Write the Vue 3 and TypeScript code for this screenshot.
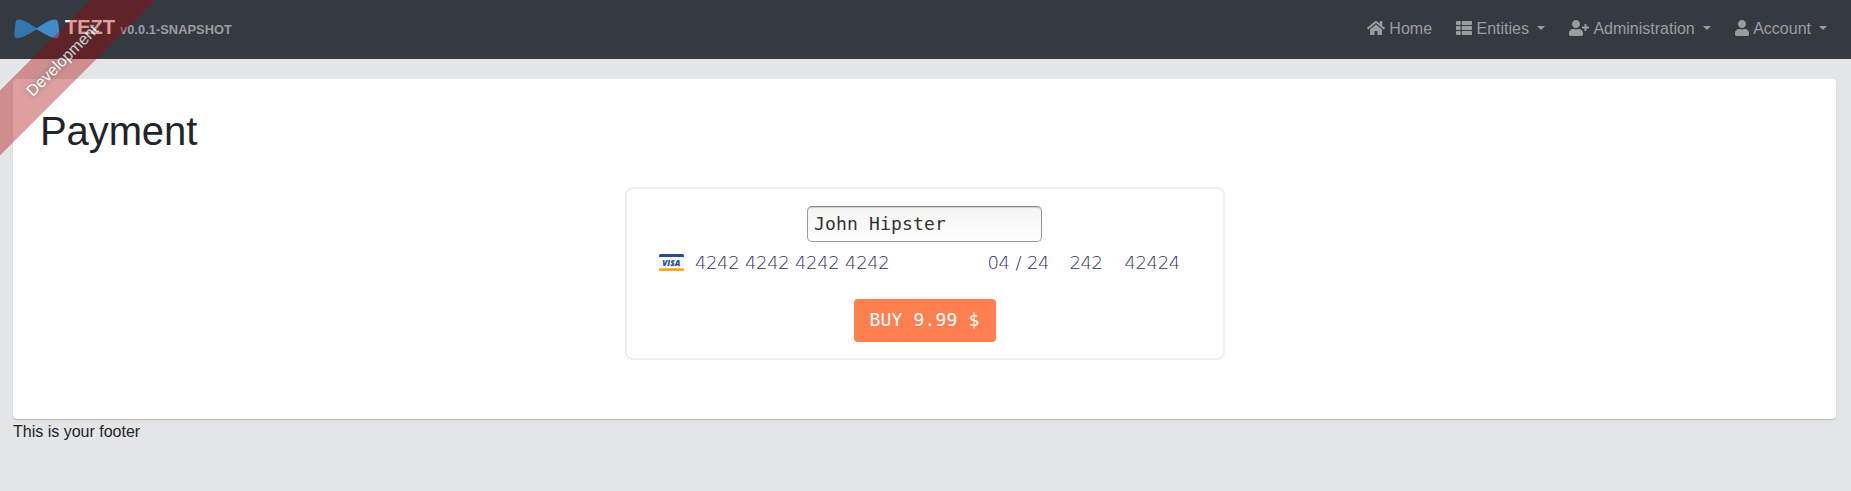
<script setup lang="ts">
import { ref } from 'vue'

interface NavItem {
  label: string
  viewBox: string
  width: number
  path: string
  dropdown: boolean
}

const items: NavItem[] = [
  {
    label: 'Home',
    viewBox: '0 0 576 512',
    width: 18,
    dropdown: false,
    path: 'M280.37 148.26L96 300.11V464a16 16 0 0 0 16 16l112.06-.29a16 16 0 0 0 15.92-16V368a16 16 0 0 1 16-16h64a16 16 0 0 1 16 16v95.64a16 16 0 0 0 16 16.05L464 480a16 16 0 0 0 16-16V300L295.67 148.26a12.19 12.19 0 0 0-15.3 0zM571.6 251.47L488 182.56V44.05a12 12 0 0 0-12-12h-56a12 12 0 0 0-12 12v72.61L318.47 43a48 48 0 0 0-61 0L4.34 251.47a12 12 0 0 0-1.6 16.9l25.5 31A12 12 0 0 0 45.15 301l235.22-193.74a12.19 12.19 0 0 1 15.3 0L530.9 301a12 12 0 0 0 16.9-1.6l25.5-31a12 12 0 0 0-1.7-16.93z',
  },
  {
    label: 'Entities',
    viewBox: '0 0 512 512',
    width: 16,
    dropdown: true,
    path: 'M149.333 216v80c0 13.255-10.745 24-24 24H24c-13.255 0-24-10.745-24-24v-80c0-13.255 10.745-24 24-24h101.333c13.255 0 24 10.745 24 24zM0 376v80c0 13.255 10.745 24 24 24h101.333c13.255 0 24-10.745 24-24v-80c0-13.255-10.745-24-24-24H24c-13.255 0-24 10.745-24 24zM125.333 32H24C10.745 32 0 42.745 0 56v80c0 13.255 10.745 24 24 24h101.333c13.255 0 24-10.745 24-24V56c0-13.255-10.745-24-24-24zm80 448H488c13.255 0 24-10.745 24-24v-80c0-13.255-10.745-24-24-24H205.333c-13.255 0-24 10.745-24 24v80c0 13.255 10.745 24 24 24zm-24-424v80c0 13.255 10.745 24 24 24H488c13.255 0 24-10.745 24-24V56c0-13.255-10.745-24-24-24H205.333c-13.255 0-24 10.745-24 24zm24 264H488c13.255 0 24-10.745 24-24v-80c0-13.255-10.745-24-24-24H205.333c-13.255 0-24 10.745-24 24v80c0 13.255 10.745 24 24 24z',
  },
  {
    label: 'Administration',
    viewBox: '0 0 640 512',
    width: 20,
    dropdown: true,
    path: 'M624 208h-64v-64c0-8.800-7.200-16-16-16h-32c-8.800 0-16 7.200-16 16v64h-64c-8.800 0-16 7.200-16 16v32c0 8.800 7.200 16 16 16h64v64c0 8.800 7.200 16 16 16h32c8.800 0 16-7.200 16-16v-64h64c8.800 0 16-7.200 16-16v-32c0-8.800-7.200-16-16-16zm-400 48c70.700 0 128-57.300 128-128S294.700 0 224 0 96 57.300 96 128s57.300 128 128 128zm89.600 32h-16.700c-22.200 10.200-46.900 16-72.900 16s-50.600-5.800-72.900-16h-16.700C60.200 288 0 348.200 0 422.400V464c0 26.500 21.500 48 48 48h352c26.500 0 48-21.500 48-48v-41.600c0-74.200-60.200-134.400-134.400-134.400z',
  },
  {
    label: 'Account',
    viewBox: '0 0 448 512',
    width: 14,
    dropdown: true,
    path: 'M224 256c70.700 0 128-57.300 128-128S294.700 0 224 0 96 57.300 96 128s57.300 128 128 128zm89.600 32h-16.700c-22.200 10.200-46.900 16-72.900 16s-50.600-5.800-72.900-16h-16.700C60.200 288 0 348.200 0 422.400V464c0 26.500 21.500 48 48 48h352c26.500 0 48-21.500 48-48v-41.600c0-74.200-60.200-134.400-134.400-134.400z',
  },
]

const holder = ref('John Hipster')
</script>

<template>
  <div class="page">
    <div class="ribbon"><a>Development</a></div>
    <header class="navbar">
      <a class="brand">
        <svg class="logo" width="46" height="20" viewBox="0 0 46 20">
          <path d="M23 9.200C17 6 12 1.500 5.500.500 2.500 0 1.700 2 1.200 5.500L.3 14c-.4 4 1.800 6 5 5C12 17.500 17 13 23 10.500z" fill="#2f77ae" />
          <path d="M22.500 9.200C28.500 6 33.500 1.500 40 .500c3-.5 3.900 1.500 4.400 5l.9 8.500c.4 4-1.800 6-5 5-6.700-1.500-11.700-6-17.800-8.500z" fill="#428bca" />
        </svg>
        <span class="name">TEZT</span>
        <span class="version">v0.0.1-SNAPSHOT</span>
      </a>
      <nav class="menu">
        <a v-for="item in items" :key="item.label" class="link">
          <svg :width="item.width" height="16" :viewBox="item.viewBox"><path :d="item.path" fill="currentColor" /></svg>
          <span>{{ item.label }}</span>
          <i v-if="item.dropdown" class="caret"></i>
        </a>
      </nav>
    </header>

    <main class="card">
      <h1>Payment</h1>
      <form class="payment" @submit.prevent>
        <input v-model="holder" class="holder" type="text" />
        <div class="details">
          <svg class="visa" width="25" height="17" viewBox="0 0 25 17">
            <rect width="25" height="17" rx="1.500" fill="#f6f9fc" />
            <path d="M0 3V1.500Q0 0 1.500 0h22Q25 0 25 1.500V3z" fill="#2a4b93" />
            <path d="M0 14.300v1.200Q0 17 1.500 17h22q1.500 0 1.500-1.500v-1.200z" fill="#ffa41c" />
            <text x="12.300" y="11.600" text-anchor="middle" textLength="18" lengthAdjust="spacingAndGlyphs">VISA</text>
          </svg>
          <span class="number">4242 4242 4242 4242</span>
          <span class="expiry">04 / 24</span>
          <span class="cvc">242</span>
          <span>42424</span>
        </div>
        <button class="buy" type="submit">BUY 9.99 $</button>
      </form>
    </main>
    <footer>This is your footer</footer>
  </div>
</template>

<style>
body {
  margin: 0;
  background: #e4e5e6;
}
</style>

<style scoped>
.page {
  position: relative;
  height: 491px;
  overflow: hidden;
  box-sizing: border-box;
  background: #e4e5e6;
  color: #212529;
  font: 16px/24px "Liberation Sans", Arial, sans-serif;
}
.ribbon {
  position: absolute;
  top: 36px;
  left: -56px;
  z-index: 10;
  width: 240px;
  overflow: hidden;
  background: rgba(170, 0, 0, 0.5);
  opacity: 0.75;
  transform: rotate(-45deg);
  white-space: nowrap;
}
.ribbon a {
  display: block;
  margin: 1px 0;
  padding: 10px 52px 10px 48px;
  color: #fff;
  text-align: center;
  text-shadow: 0 0 5px #444;
}
.navbar {
  display: flex;
  align-items: center;
  justify-content: space-between;
  height: 59px;
  box-sizing: border-box;
  padding: 0 24px 3px 13px;
  background: #353a41;
}
.brand {
  display: flex;
  align-items: center;
  color: #fff;
  font-weight: 700;
}
.logo {
  margin: 1px 5px 0 1px;
}
.name {
  margin-top: -2px;
  font-size: 20px;
  line-height: 30px;
}
.version {
  margin: 3px 0 0 5px;
  font-size: 12.800px;
  letter-spacing: 0.060px;
  color: #9a9da0;
}
.menu {
  display: flex;
  gap: 24px;
}
.link {
  display: flex;
  align-items: center;
  color: #9a9da0;
}
.link svg {
  margin-right: 4.450px;
}
.link span {
  margin: 1px 0 -1px;
}
.caret {
  margin: 0 0 0 8px;
  border: 4px solid transparent;
  border-top-color: currentColor;
  border-bottom: 0;
}
.card {
  height: 340px;
  box-sizing: border-box;
  margin: 20px 15px 0 13px;
  padding: 28px 27px;
  border-radius: 4px;
  background: #fff;
  box-shadow: 0 1px 1px rgba(0, 0, 0, 0.22);
}
h1 {
  margin: 0 0 32px;
  font-size: 40px;
  line-height: 48px;
  font-weight: 500;
  letter-spacing: -0.100px;
}
.payment {
  display: flex;
  flex-direction: column;
  align-items: center;
  width: 600px;
  height: 173px;
  box-sizing: border-box;
  margin: 0 auto;
  padding: 17px 32px 0;
  border: 2px solid #eee;
  border-radius: 8px;
}
.holder {
  width: 235px;
  height: 36px;
  box-sizing: border-box;
  padding: 0 6px 2px;
  border: 1px solid #999;
  border-top-color: #888;
  border-radius: 5px;
  outline: 0;
  background: linear-gradient(#f4f4f4, #fff);
  box-shadow: inset 0 1px 1px rgba(0, 0, 0, 0.15);
  color: #333;
  font: 18px "DejaVu Sans Mono", monospace;
  letter-spacing: 0.160px;
}
.details {
  display: flex;
  align-items: center;
  align-self: stretch;
  height: 42px;
  color: #32325d;
  font: 200 18px/22px "DejaVu Sans", sans-serif;
  letter-spacing: -0.400px;
  word-spacing: 0.500px;
}
.details span {
  margin-top: -1px;
  white-space: nowrap;
}
.visa {
  margin: -1px 11.500px 0 0;
}
.visa text {
  fill: #2a4b93;
  font: italic 800 8px "Open Sans", sans-serif;
  letter-spacing: 0;
}
.number {
  width: 292.500px;
}
.expiry {
  width: 82px;
}
.cvc {
  width: 55px;
}
.buy {
  width: 142px;
  height: 43px;
  margin-top: 15px;
  padding: 0 0 2px;
  border: 0;
  border-radius: 4px;
  background: coral;
  color: #fff;
  font: 18px "DejaVu Sans Mono", monospace;
  letter-spacing: 0.160px;
}
footer {
  margin: 1px 13px 0;
}
</style>
